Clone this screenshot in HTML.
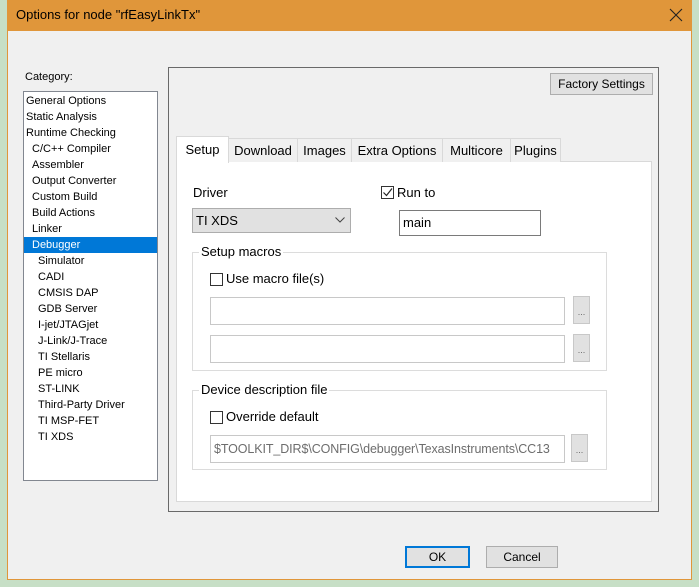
<!DOCTYPE html>
<html><head><style>
*{margin:0;padding:0;box-sizing:border-box}
body{width:699px;height:587px;background:#c7dfc6;position:relative;overflow:hidden;font-family:"Liberation Sans",sans-serif;font-size:12px;color:#000}
.a{position:absolute}
.win{left:7px;top:0;width:685px;height:580px;background:#f0f0f0;border:1px solid #e0963a}
.title{left:7px;top:0;width:685px;height:31px;background:#e0963a}
.list{left:23px;top:91px;width:135px;height:390px;background:#fff;border:1px solid #828790}
.it{position:absolute;left:2px;height:16px;line-height:16px;font-size:11px;white-space:nowrap}
.tab{position:absolute;top:138px;height:24px;line-height:23px;text-align:center;font-size:13px;background:#f0f0f0;border:1px solid #d9d9d9;border-bottom:none}
.cb{position:absolute;width:13px;height:13px;border:1px solid #333;background:#fff}
.inp{position:absolute;background:#fff;border:1px solid #c8c8c8}
.dots{position:absolute;width:17px;height:28px;background:#e1e1e1;border:1px solid #c8c8c8;font-size:9px;text-align:center;line-height:30px;color:#666}
.grp{position:absolute;border:1px solid #dcdcdc}
.gl{position:absolute;background:#fff;padding:0 2px;font-size:13px}
.btn{position:absolute;background:#e1e1e1;border:1px solid #adadad;text-align:center;font-size:12px}
</style></head><body>
<div class="a win"></div>
<div class="a title"></div>
<div class="a" style="left:16px;top:7px;font-size:13px">Options for node "rfEasyLinkTx"</div>
<svg class="a" style="left:669px;top:8px" width="14" height="14"><path d="M1 1 L13 13 M13 1 L1 13" stroke="#222" stroke-width="1.1"/></svg>
<div class="a" style="left:25px;top:71px;font-size:11px">Category:</div>
<div class="a list">
<div class="it" style="top:1px">General Options</div>
<div class="it" style="top:17px">Static Analysis</div>
<div class="it" style="top:33px">Runtime Checking</div>
<div class="it" style="top:49px;left:8px">C/C++ Compiler</div>
<div class="it" style="top:65px;left:8px">Assembler</div>
<div class="it" style="top:81px;left:8px">Output Converter</div>
<div class="it" style="top:97px;left:8px">Custom Build</div>
<div class="it" style="top:113px;left:8px">Build Actions</div>
<div class="it" style="top:129px;left:8px">Linker</div>
<div class="it" style="top:145px;left:0;width:133px;padding-left:8px;background:#0078d7;color:#fff">Debugger</div>
<div class="it" style="top:161px;left:14px">Simulator</div>
<div class="it" style="top:177px;left:14px">CADI</div>
<div class="it" style="top:193px;left:14px">CMSIS DAP</div>
<div class="it" style="top:209px;left:14px">GDB Server</div>
<div class="it" style="top:225px;left:14px">I-jet/JTAGjet</div>
<div class="it" style="top:241px;left:14px">J-Link/J-Trace</div>
<div class="it" style="top:257px;left:14px">TI Stellaris</div>
<div class="it" style="top:273px;left:14px">PE micro</div>
<div class="it" style="top:289px;left:14px">ST-LINK</div>
<div class="it" style="top:305px;left:14px">Third-Party Driver</div>
<div class="it" style="top:321px;left:14px">TI MSP-FET</div>
<div class="it" style="top:337px;left:14px">TI XDS</div>
</div>
<div class="a" style="left:168px;top:67px;width:491px;height:445px;border:1px solid #696969"></div>
<div class="btn" style="left:550px;top:73px;width:103px;height:22px;line-height:20px">Factory Settings</div>
<div class="a" style="left:176px;top:161px;width:476px;height:341px;background:#fff;border:1px solid #d9d9d9"></div>
<div class="tab" style="left:228px;width:70px">Download</div>
<div class="tab" style="left:297px;width:55px">Images</div>
<div class="tab" style="left:351px;width:92px">Extra Options</div>
<div class="tab" style="left:442px;width:69px">Multicore</div>
<div class="tab" style="left:510px;width:51px">Plugins</div>
<div class="tab" style="left:176px;top:136px;width:53px;height:27px;background:#fff;line-height:25px">Setup</div>
<div class="a" style="left:193px;top:185px;font-size:13px">Driver</div>
<div class="a" style="left:192px;top:208px;width:159px;height:25px;background:#e1e1e1;border:1px solid #adadad;font-size:13px;line-height:23px;padding-left:3px">TI XDS<svg style="position:absolute;right:5px;top:8px" width="10" height="6"><path d="M0.5 0.5 L5 5 L9.5 0.5" fill="none" stroke="#444" stroke-width="1"/></svg></div>
<div class="cb" style="left:381px;top:186px"><svg width="11" height="11" style="position:absolute;left:0;top:0"><path d="M1.5 5.5 L4.5 8.5 L10 1.5" fill="none" stroke="#222" stroke-width="1.2"/></svg></div>
<div class="a" style="left:397px;top:185px;font-size:13px">Run to</div>
<div class="inp" style="left:399px;top:210px;width:142px;height:26px;border-color:#7a7a7a;font-size:13px;line-height:24px;padding-left:3px">main</div>
<div class="grp" style="left:192px;top:252px;width:415px;height:119px"></div>
<div class="gl" style="left:199px;top:244px">Setup macros</div>
<div class="cb" style="left:210px;top:273px"></div>
<div class="a" style="left:226px;top:271px;font-size:13px">Use macro file(s)</div>
<div class="inp" style="left:210px;top:297px;width:355px;height:28px"></div>
<div class="dots" style="left:573px;top:296px">...</div>
<div class="inp" style="left:210px;top:335px;width:355px;height:28px"></div>
<div class="dots" style="left:573px;top:334px">...</div>
<div class="grp" style="left:192px;top:390px;width:415px;height:80px"></div>
<div class="gl" style="left:199px;top:382px">Device description file</div>
<div class="cb" style="left:210px;top:411px"></div>
<div class="a" style="left:226px;top:409px;font-size:13px">Override default</div>
<div class="inp" style="left:210px;top:435px;width:355px;height:28px;color:#6d6d6d;font-size:12.5px;line-height:26px;padding-left:3px;overflow:hidden;white-space:nowrap;letter-spacing:-0.1px">$TOOLKIT_DIR$\CONFIG\debugger\TexasInstruments\CC13</div>
<div class="dots" style="left:571px;top:434px">...</div>
<div class="btn" style="left:405px;top:546px;width:65px;height:22px;line-height:18px;border:2px solid #0078d7">OK</div>
<div class="btn" style="left:486px;top:546px;width:72px;height:22px;line-height:20px">Cancel</div>
</body></html>
